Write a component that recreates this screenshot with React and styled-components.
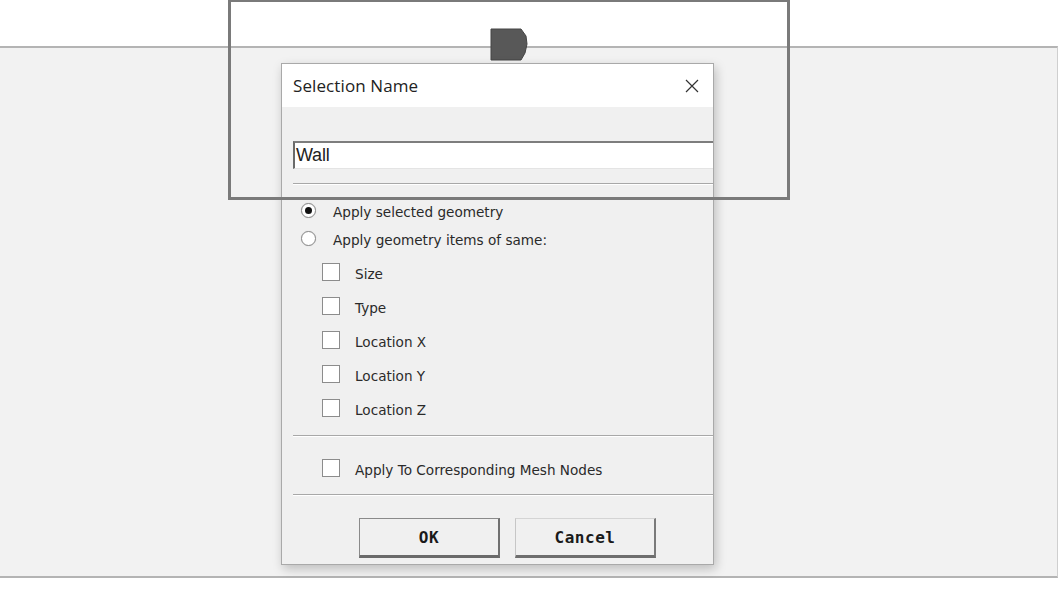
import React from "react";
import styled, { createGlobalStyle } from "styled-components";

const Global = createGlobalStyle`
  html, body { margin: 0; padding: 0; background: #ffffff; }
  body { font-family: "Noto Sans", "Liberation Sans", sans-serif; overflow: hidden; }
`;

const Stage = styled.div`
  position: relative;
  width: 1060px;
  height: 592px;
  padding-top: 46px;
  box-sizing: border-box;
`;

const Panel = styled.div`
  height: 532px;
  width: 1058px;
  background: #f2f2f2;
  border-top: 2px solid #b4b4b4;
  border-bottom: 2px solid #b4b4b4;
  border-right: 1px solid #cfcfcf;
  box-sizing: border-box;
`;

const Tab = styled.svg`
  position: absolute;
  left: 490px;
  top: 28px;
`;

const Outline = styled.div`
  position: absolute;
  left: 228px;
  top: -1px;
  width: 562px;
  height: 201px;
  border: 3px solid #7a7a7a;
  box-sizing: border-box;
  z-index: 3;
  pointer-events: none;
`;

const Dialog = styled.div`
  position: absolute;
  left: 281px;
  top: 63px;
  width: 433px;
  height: 502px;
  background: #f0f0f0;
  border: 1px solid #a9a9a9;
  box-sizing: border-box;
  box-shadow: 2px 4px 10px rgba(0, 0, 0, 0.22);
  display: flex;
  flex-direction: column;
  overflow: hidden;
  z-index: 2;
`;

const TitleBar = styled.div`
  height: 43px;
  background: #ffffff;
  display: flex;
  align-items: center;
  justify-content: space-between;
  padding: 0 14px 0 11px;
  flex-shrink: 0;
`;

const Title = styled.span`
  font-family: "Open Sans", "Noto Sans", sans-serif;
  font-size: 17px;
  color: #222;
  letter-spacing: 0.1px;
`;

const Close = styled.svg`
  display: block;
`;

const Body = styled.div`
  display: flex;
  flex-direction: column;
  padding-left: 11px;
  flex: 1;
`;

const NameInput = styled.div`
  margin-top: 34px;
  height: 28px;
  margin-right: -6px;
  background: #ffffff;
  border-top: 2px solid #7d7d7d;
  border-left: 2px solid #6a6a6a;
  border-bottom: 1px solid #e4e4e4;
  box-sizing: border-box;
  display: flex;
  align-items: center;
  padding-left: 1px;
  font-family: "Liberation Sans", Arial, sans-serif;
  font-size: 18px;
  letter-spacing: -0.2px;
  color: #222;
`;

const Separator = styled.div`
  height: 0;
  border-top: 1px solid #a8a8a8;
  border-bottom: 1px solid #ffffff;
  margin-top: ${(p) => p.$top}px;
`;

const Options = styled.div`
  display: flex;
  flex-direction: column;
  gap: ${(p) => p.$gap}px;
  margin-top: ${(p) => p.$top}px;
  padding-left: ${(p) => p.$indent}px;
`;

const Row = styled.label`
  display: flex;
  align-items: center;
  height: ${(p) => p.$h}px;
  font-family: "DejaVu Sans", sans-serif;
  font-size: 13.6px;
  letter-spacing: 0;
  color: #2a2a2a;
`;

const Label = styled.span`
  position: relative;
  top: 2px;
`;

const Radio = styled.span`
  width: 15px;
  height: 15px;
  border-radius: 50%;
  border: 1px solid #8a8a8a;
  background: #ffffff;
  box-sizing: border-box;
  display: flex;
  align-items: center;
  justify-content: center;
  margin-right: 17px;
  box-shadow: 0 0 1px rgba(0,0,0,0.2);
  &::after {
    content: "";
    width: 7px;
    height: 7px;
    border-radius: 50%;
    background: ${(p) => (p.$checked ? "#111" : "transparent")};
  }
`;

const Box = styled.span`
  width: 18px;
  height: 18px;
  border: 1px solid #8c8c8c;
  background: #ffffff;
  box-sizing: border-box;
  margin-right: 15px;
  flex-shrink: 0;
`;

const ButtonRow = styled.div`
  display: flex;
  gap: 15px;
  margin-top: 22px;
  padding-left: 66px;
`;

const Button = styled.button`
  width: 141px;
  height: 40px;
  background: #f0f0f0;
  border-top: 1px solid #d4d4d4;
  border-left: 1px solid #c6c6c6;
  border-right: 2px solid #7a7a7a;
  border-bottom: 3px solid #6e6e6e;
  box-sizing: border-box;
  font-family: "DejaVu Sans Mono", "Liberation Mono", monospace;
  font-weight: bold;
  font-size: 16px;
  letter-spacing: 0.5px;
  color: #1a1a1a;
  padding: 0;
  ${(p) => p.$default && `border: 1px solid #8a8a8a; border-right: 2px solid #707070; border-bottom: 3px solid #6a6a6a;`}
`;

const options = ["Size", "Type", "Location X", "Location Y", "Location Z"];

export default function App() {
  return (
    <>
      <Global />
      <Stage>
        <Panel />
        <Tab width="38" height="33" viewBox="0 0 38 33">
          <path d="M1 1 H31 L36 8 L37 16 L35 25 L31 32 H1 Z" fill="#585858" stroke="#444" strokeWidth="1" />
        </Tab>
        <Dialog>
          <TitleBar>
            <Title>Selection Name</Title>
            <Close width="14" height="14" viewBox="0 0 14 14">
              <path d="M1 1 L13 13 M13 1 L1 13" stroke="#333" strokeWidth="1.2" />
            </Close>
          </TitleBar>
          <Body>
            <NameInput>Wall</NameInput>
            <Separator $top={14} />
            <Options $gap={12} $top={17} $indent={8}>
              <Row $h={16}><Radio $checked /><Label>Apply selected geometry</Label></Row>
              <Row $h={16}><Radio /><Label>Apply geometry items of same:</Label></Row>
            </Options>
            <Options $gap={16} $top={17} $indent={29}>
              {options.map((o) => (
                <Row key={o} $h={18}><Box /><Label>{o}</Label></Row>
              ))}
            </Options>
            <Separator $top={18} />
            <Options $gap={0} $top={22} $indent={29}>
              <Row $h={18}><Box /><Label>Apply To Corresponding Mesh Nodes</Label></Row>
            </Options>
            <Separator $top={17} />
            <ButtonRow>
              <Button $default>OK</Button>
              <Button>Cancel</Button>
            </ButtonRow>
          </Body>
        </Dialog>
        <Outline />
      </Stage>
    </>
  );
}
